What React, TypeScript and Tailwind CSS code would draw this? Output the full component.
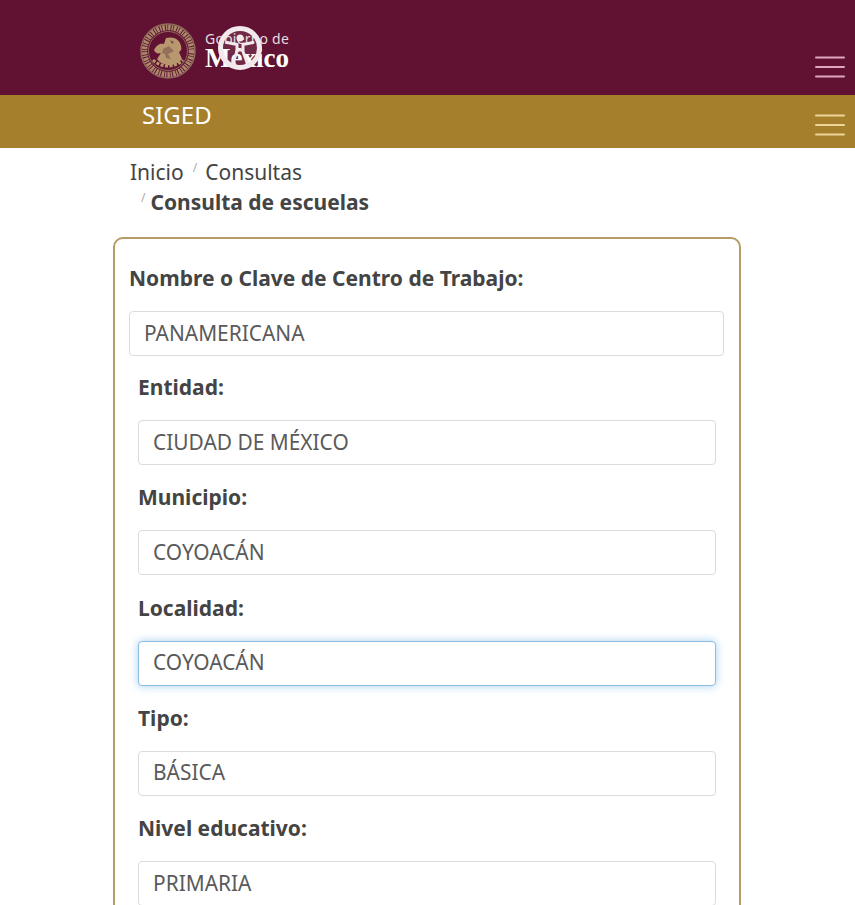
const font = { fontFamily: '"Noto Sans", sans-serif' };

function Burger({ color }: { color: string }) {
  return (
    <svg width="30" height="24" viewBox="0 0 30 24" className="block">
      <g stroke={color} strokeWidth="2" strokeLinecap="round">
        <path d="M1 2.5H29" />
        <path d="M1 12H29" />
        <path d="M1 21.5H29" />
      </g>
    </svg>
  );
}

function Emblem() {
  return (
    <svg width="56" height="56" viewBox="0 0 56 56" className="shrink-0 blur-[0.5px]">
      <circle cx="28" cy="28" r="27" fill="none" stroke="#8f6a5c" strokeWidth="1.5" />
      <circle cx="28" cy="28" r="23.5" fill="none" stroke="#ab8a6c" strokeWidth="5.5" strokeDasharray="2.5 1 1.5 0.8" />
      <circle cx="28" cy="28" r="19.5" fill="none" stroke="#8f6a5c" strokeWidth="1" />
      <path d="M14 27c3-6 7-7 10-6l2-6c7-2 14 1 15 8 1 3 0 5-2 6l3 7c-4 5-10 7-15 6-5-1-8-3-10-6l4-6c-3 1-6 0-7-3z" fill="#b8976f" />
      <path d="M23 26l6-3 5 5-6 3 3 5-5-1-1-4-3-1z" fill="#94705a" />
      <path d="M30 17l4 2-2 2z" fill="#7a4a4a" />
      <path d="M13 37c8 8 22 8 30 0" stroke="#b8976f" strokeWidth="3" fill="none" strokeDasharray="3 1.5" />
    </svg>
  );
}

function Accessibility() {
  return (
    <svg width="44" height="44" viewBox="0 0 44 44" className="absolute left-[218px] top-[26px]">
      <circle cx="22" cy="22" r="19.5" fill="#ffffff" fillOpacity="0.1" stroke="#f1e9ec" strokeWidth="5" />
      <circle cx="22" cy="12" r="3.5" fill="#f1e9ec" />
      <path d="M9 16.5l10 2v7l-4 11M35 16.5l-10 2v7l4 11M19 24h6" stroke="#f1e9ec" strokeWidth="3" fill="none" strokeLinecap="round" />
    </svg>
  );
}

function Field({ label, value, focused }: { label: string; value: string; focused?: boolean }) {
  return (
    <div className="pl-[9px] pr-[8px]">
      <label className="block h-[30px] text-[21px] leading-[28px] font-bold text-[#444444]">{label}</label>
      <input
        readOnly
        value={value}
        style={font}
        className={`mt-[17px] mb-[18.25px] block h-[45px] w-full rounded-[4px] border bg-white px-[14px] pb-[2px] text-[20.9px] text-[#5a5a5a] outline-none ${
          focused ? 'border-[#8dbde0] shadow-[0_0_8px_rgba(102,175,233,0.6)]' : 'border-[#dcdcdc]'
        }`}
      />
    </div>
  );
}

export default function App() {
  return (
    <div style={font} className="relative h-[905px] w-[855px] overflow-hidden bg-white">
      <header className="flex h-[95px] items-start justify-between bg-[#611232] pl-[140px] pr-[10px]">
        <div className="flex items-center pt-[23px]">
          <Emblem />
          <div className="ml-[9px] -mt-[4px] text-white">
            <div className="text-[14px] leading-[17px] tracking-[0.2px] text-[#e6dcdf]">Gobierno de</div>
            <div className="text-[27px] leading-[22px] font-bold" style={{ fontFamily: '"Liberation Serif", serif' }}>México</div>
          </div>
        </div>
        <div className="pt-[55px]"><Burger color="#dfa5c1" /></div>
      </header>
      <Accessibility />
      <div className="flex h-[53px] items-start justify-between bg-[#a57f2c] pl-[142px] pr-[10px]">
        <span className="pt-[3px] text-[24px] leading-[34px] text-white">SIGED</span>
        <div className="pt-[18px]"><Burger color="#eed59a" /></div>
      </div>
      <nav className="pl-[130px] pt-[10px] text-[21px] leading-[29px] text-[#444444]">
        <div className="h-[30px]">
          Inicio<span className="ml-[9px] mr-[8px] align-[8px] text-[12px] leading-none text-[#aaaaaa]">/</span>Consultas
        </div>
        <div className="h-[28px] pl-[11px]">
          <span className="mr-[5px] align-[8px] text-[12px] leading-none text-[#aaaaaa]">/</span>
          <span className="font-bold">Consulta de escuelas</span>
        </div>
      </nav>
      <main className="ml-[113px] mt-[21px] w-[628px] rounded-[10px] border-2 border-[#b79b66] pl-[14px] pr-[15px] pt-[24px]">
        <label className="block h-[30px] text-[21px] leading-[30px] font-bold text-[#444444]">
          Nombre o Clave de Centro de Trabajo:
        </label>
        <input
          readOnly
          value="PANAMERICANA"
          style={font}
          className="mt-[18px] mb-[17px] block h-[45px] w-full rounded-[4px] border border-[#dcdcdc] bg-white px-[14px] pb-[2px] text-[20.9px] text-[#5a5a5a] outline-none"
        />
        <Field label="Entidad:" value="CIUDAD DE MÉXICO" />
        <Field label="Municipio:" value="COYOACÁN" />
        <Field label="Localidad:" value="COYOACÁN" focused />
        <Field label="Tipo:" value="BÁSICA" />
        <Field label="Nivel educativo:" value="PRIMARIA" />
      </main>
    </div>
  );
}
